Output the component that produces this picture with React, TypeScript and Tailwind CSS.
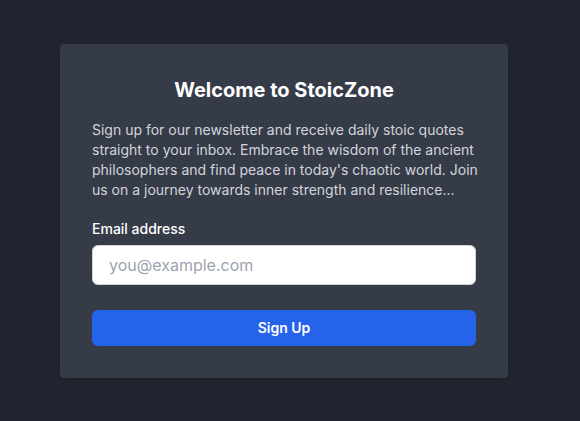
export default function App() {
  return (
    <div className="min-h-screen bg-[#20252f] flex justify-center pr-3 pt-[44px]" style={{ fontFamily: 'Inter, "Noto Sans", sans-serif' }}>
      <div className="w-[448px] h-[334px] bg-[#363b48] rounded p-8 shadow-md">
        <h1 className="text-xl font-bold text-white text-center leading-7 mb-4">Welcome to StoicZone</h1>
        <p className="w-[388px] text-sm leading-5 text-[#d1d5db] mb-[19px]">
          Sign up for our newsletter and receive daily stoic quotes straight to your inbox. Embrace the wisdom of the ancient philosophers and find peace in today's chaotic world. Join us on a journey towards inner strength and resilience...
        </p>
        <label className="block text-sm leading-5 font-medium text-white mb-[6px]">Email address</label>
        <input
          type="email"
          placeholder="you@example.com"
          className="block w-full h-10 px-4 text-base bg-white border border-[#d1d5db] rounded-md placeholder:text-[#9ca3af] text-[#111827] mb-[25px] outline-none"
        />
        <button className="w-full h-9 bg-[#2563eb] text-white text-sm font-semibold rounded-md">Sign Up</button>
      </div>
    </div>
  );
}
